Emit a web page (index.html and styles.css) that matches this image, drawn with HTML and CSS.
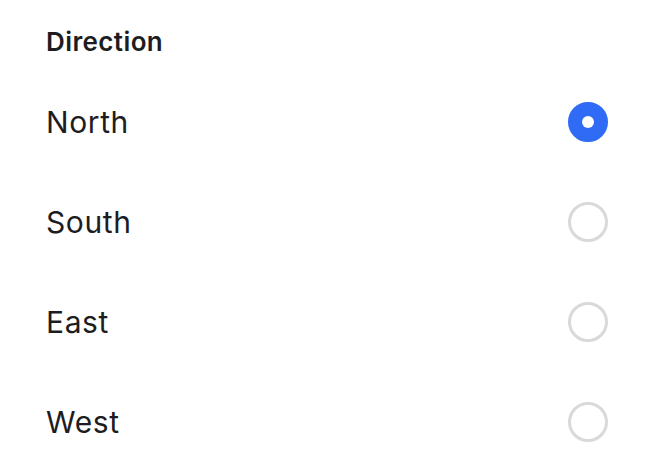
FILE: index.html
```html
<!DOCTYPE html>
<html lang="en">
<head>
  <meta charset="UTF-8" />
  <meta name="viewport" content="width=device-width, initial-scale=1.0"/>
  <title>Direction</title>
  <link rel="stylesheet" href="styles.css">
</head>
<body>
  <fieldset class="radio-group">
    <legend class="group-label">Direction</legend>
    <label class="option">
      <span class="option-text">North</span>
      <input type="radio" name="direction" value="north" checked>
      <span class="radio"></span>
    </label>
    <label class="option">
      <span class="option-text">South</span>
      <input type="radio" name="direction" value="south">
      <span class="radio"></span>
    </label>
    <label class="option">
      <span class="option-text">East</span>
      <input type="radio" name="direction" value="east">
      <span class="radio"></span>
    </label>
    <label class="option">
      <span class="option-text">West</span>
      <input type="radio" name="direction" value="west">
      <span class="radio"></span>
    </label>
  </fieldset>
</body>
</html>
```

FILE: styles.css
```css
* {
  margin: 0;
  padding: 0;
  box-sizing: border-box;
}

body {
  font-family: Inter, "Noto Sans", sans-serif;
  background: #fff;
  color: #1d1d1f;
  padding: 0 58px 0 46px;
}

.radio-group {
  border: none;
  display: flex;
  flex-direction: column;
}

.group-label {
  font-size: 26px;
  font-weight: 600;
  letter-spacing: 0.4px;
  line-height: 28px;
  padding-top: 28px;
  margin-bottom: 16px;
  float: left;
  width: 100%;
}

.option {
  display: flex;
  align-items: center;
  justify-content: space-between;
  height: 100px;
  cursor: pointer;
}

.option-text {
  font-size: 30px;
  line-height: 36px;
  letter-spacing: 0.6px;
}

.option input {
  display: none;
}

.radio {
  width: 40px;
  height: 40px;
  border-radius: 50%;
  border: 3px solid #d9d9d9;
  display: flex;
  align-items: center;
  justify-content: center;
}

.option input:checked + .radio {
  background: #2f6bf5;
  border-color: #2f6bf5;
}

.option input:checked + .radio::after {
  content: "";
  width: 12px;
  height: 12px;
  border-radius: 50%;
  background: #fff;
}
```
